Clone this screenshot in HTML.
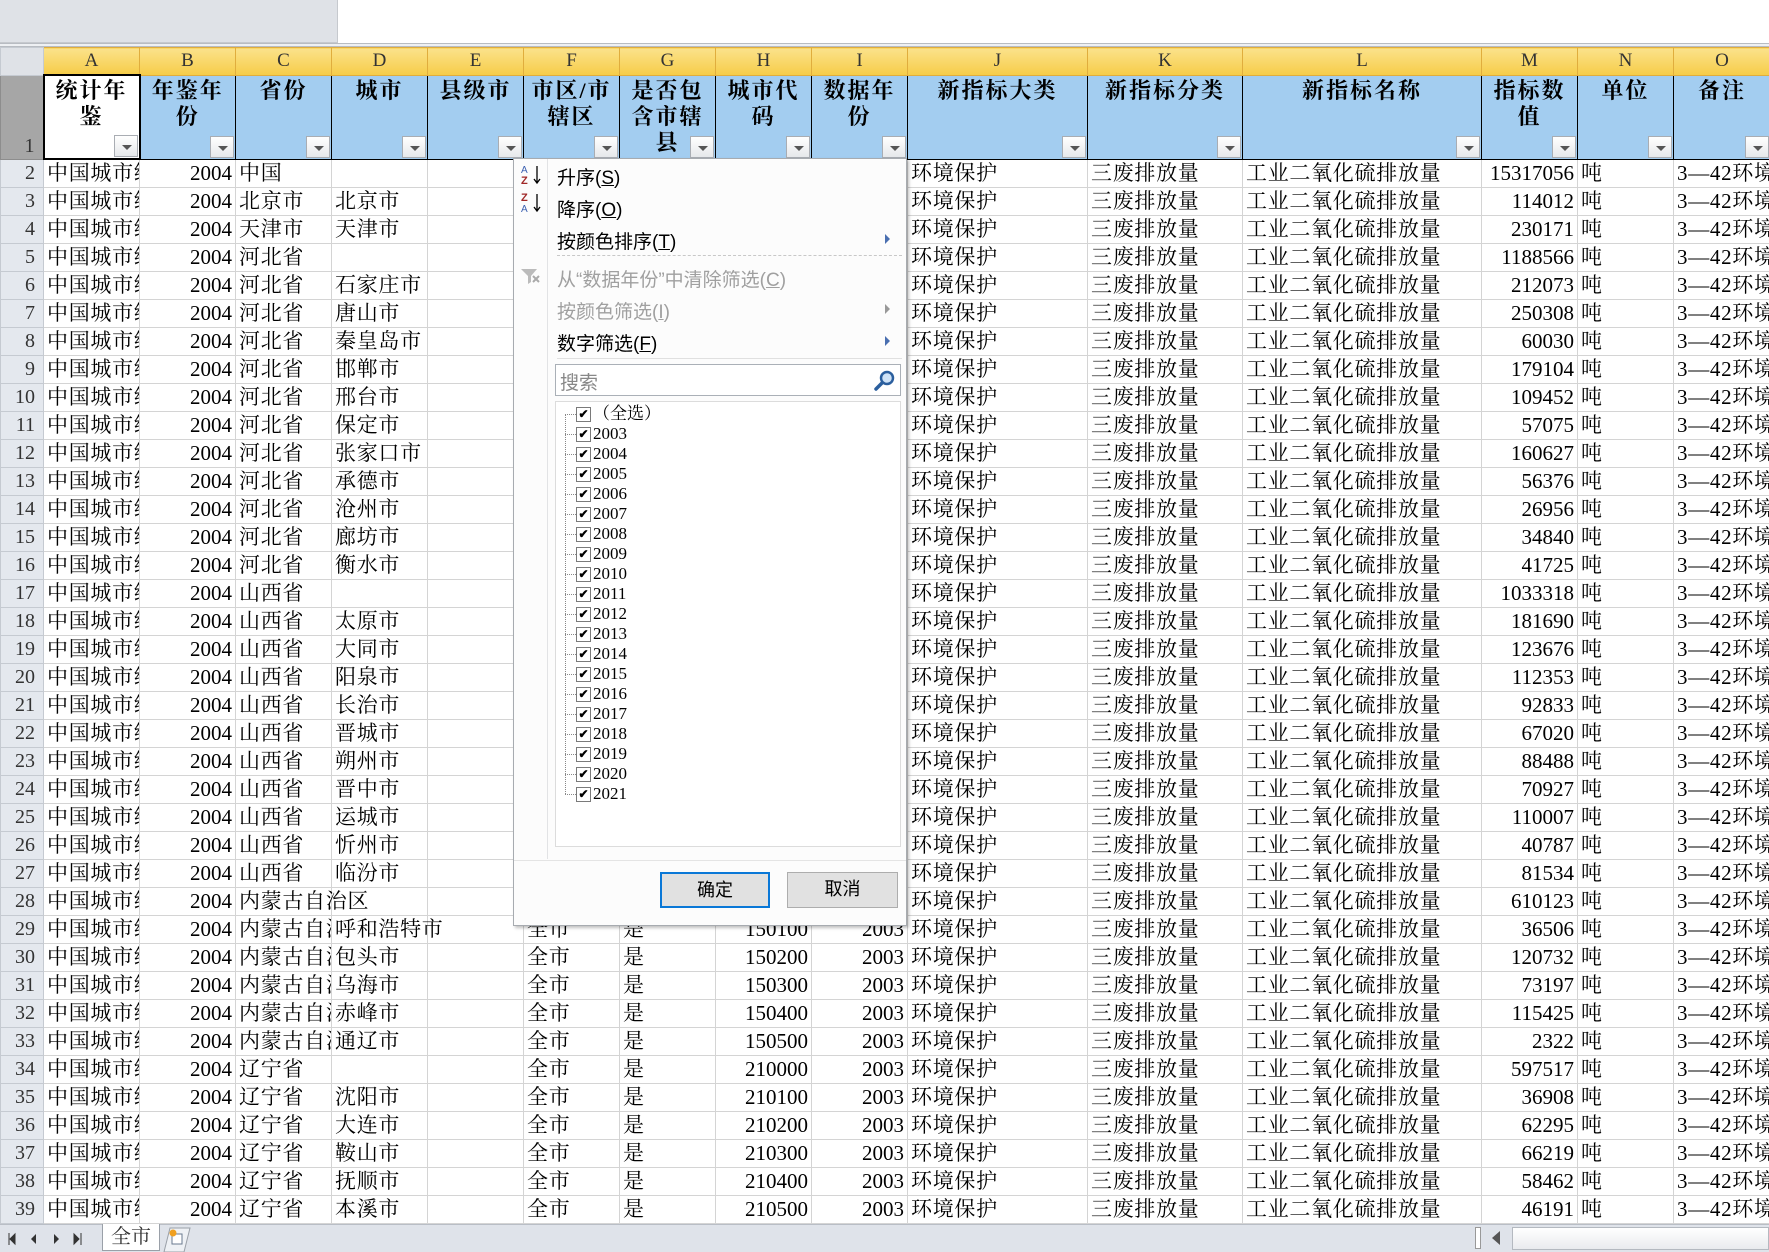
<!DOCTYPE html>
<html><head><meta charset="utf-8">
<style>
*{box-sizing:border-box;margin:0;padding:0}
body{width:1769px;height:1252px;overflow:hidden;background:#fff;font-family:"Liberation Serif","Noto Serif CJK SC","Noto Sans CJK SC",serif;position:relative}
.topgray{position:absolute;left:0;top:0;width:338px;height:43px;background:#dfe2e7;border-right:1px solid #c6c9ce;border-bottom:1px solid #c6c9ce}
.topline{position:absolute;left:0;top:43px;width:1769px;height:4px;border-top:1px solid #b8bcc2;border-bottom:1px solid #b8bcc2;background:#eef0f3}
table{position:absolute;left:0;top:47px;border-collapse:collapse;table-layout:fixed;width:1770px}
td{border:1px solid #d4d4d4;height:28px;font-size:21px;letter-spacing:0.7px;white-space:nowrap;overflow:hidden;padding:0 3px;line-height:26px;color:#000}
td.r{text-align:right;letter-spacing:0}
td.rh{background:#e4e8ee;border-color:#c5cad1;text-align:right;padding-right:8px;color:#333;font-size:20px;letter-spacing:0}
tr.ch td{height:27px;background:linear-gradient(#fbe28b,#f6cc48);border-color:#e0ad3d;text-align:center;font-size:19px;line-height:26px;color:#333;letter-spacing:0}
tr.ch td.corner{background:#dfe2e7;border-color:#c5cad1}
tr.h1 td{height:84px;background:#a3cdf0;border:1px solid #000;border-top-color:#e0ad3d;font-weight:bold;font-size:22px;letter-spacing:2px;text-align:center;vertical-align:top;white-space:nowrap;line-height:26px;padding-top:2px;position:relative}
tr.h1 td.rh{background:#a6a6a6;border-color:#8d8d8d;vertical-align:bottom;font-weight:normal;font-size:20px;letter-spacing:0;text-align:right;padding-bottom:0}
tr.h1 td.a1{background:#fff;border:2px solid #000}
.fb{position:absolute;right:1px;bottom:1px;width:24px;height:22px;background:linear-gradient(#fff,#e6e8eb);border:1px solid #a9adb3}
.fb:after{content:"";position:absolute;left:7px;top:9px;border-left:5px solid transparent;border-right:5px solid transparent;border-top:5px solid #555}
.ov{overflow:visible;position:relative;z-index:1}
.dd{position:absolute;left:513px;top:158px;width:394px;height:768px;background:#fcfcfc;border:1px solid #a7abb0;box-shadow:2px 2px 3px rgba(0,0,0,.25);z-index:5;font-family:"Liberation Sans","Noto Sans CJK SC",sans-serif}
.dd .sep{position:absolute;left:33px;top:0;width:1px;height:700px;background:#e2e3e5}
.mi{position:absolute;left:43px;font-size:19px;color:#000}
.mi.g{color:#a0a0a0}
.arr{position:absolute;left:371px;border-top:5px solid transparent;border-bottom:5px solid transparent;border-left:5px solid #4a6fb0}
.arr.g{border-left-color:#999}
.srch{position:absolute;left:41px;top:205px;width:346px;height:32px;border:1px solid #aab0b7;background:#fff;font-size:19px;color:#888;padding:3px 4px}
.lst{position:absolute;left:41px;top:242px;width:346px;height:446px;border:1px solid #dcdcdc;background:#fff}
.it{position:absolute;left:37px;font-size:17px;font-family:"Liberation Serif","Noto Serif CJK SC",serif;line-height:20px}
.cb{position:absolute;left:-17px;top:3px;width:15px;height:15px;border:1px solid #7a7a7a;background:#fff;font-size:12px;line-height:13px;text-align:center;font-weight:bold}
.dl{position:absolute;left:-28px;top:10px;width:11px;border-top:1px dotted #888}
.btn{position:absolute;top:713px;height:36px;background:#e1e1e1;border:1px solid #adadad;font-size:18px;text-align:center;line-height:32px}
.bot{position:absolute;left:0;top:701px;width:392px;height:1px;background:#e4e4e4}
.tabs{position:absolute;left:0;top:1224px;width:1769px;height:28px;background:#dfe3ea;border-top:1px solid #b9bec6}
.tab{position:absolute;left:102px;top:-1px;width:58px;height:27px;background:#fff;border:1px solid #9aa0a8;border-top:none;font-size:20px;text-align:center;line-height:26px;color:#333}
</style></head><body>
<div class="topgray"></div><div class="topline"></div>
<table id="t">
<colgroup><col style="width:43px"><col style="width:96px"><col style="width:96px"><col style="width:96px"><col style="width:96px"><col style="width:96px"><col style="width:96px"><col style="width:96px"><col style="width:96px"><col style="width:96px"><col style="width:180px"><col style="width:155px"><col style="width:239px"><col style="width:96px"><col style="width:96px"><col style="width:97px"></colgroup>
<tr class="ch"><td class="corner"></td><td>A</td><td>B</td><td>C</td><td>D</td><td>E</td><td>F</td><td>G</td><td>H</td><td>I</td><td>J</td><td>K</td><td>L</td><td>M</td><td>N</td><td>O</td></tr>
<tr class="h1"><td class="rh">1</td><td class="a1">统计年<br>鉴<div class="fb"></div></td><td>年鉴年<br>份<div class="fb"></div></td><td>省份<div class="fb"></div></td><td>城市<div class="fb"></div></td><td>县级市<div class="fb"></div></td><td>市区/市<br>辖区<div class="fb"></div></td><td>是否包<br>含市辖<br>县<div class="fb"></div></td><td>城市代<br>码<div class="fb"></div></td><td>数据年<br>份<div class="fb"></div></td><td>新指标大类<div class="fb"></div></td><td>新指标分类<div class="fb"></div></td><td>新指标名称<div class="fb"></div></td><td>指标数<br>值<div class="fb"></div></td><td>单位<div class="fb"></div></td><td>备注<div class="fb"></div></td></tr>
</table>
<div class="dd">
<div class="sep"></div>
<svg style="position:absolute;left:6px;top:4px" width="24" height="56" viewBox="0 0 24 56"><text x="1" y="10" font-size="10" fill="#3a5fb0" font-family="Liberation Sans">A</text><text x="1" y="21" font-size="11" fill="#a02828" font-weight="bold" font-family="Liberation Sans">Z</text><path d="M17 3V20M14 16l3 4 3-4" stroke="#000" fill="none" stroke-width="1.3"/><text x="1" y="38" font-size="11" fill="#a02828" font-weight="bold" font-family="Liberation Sans">Z</text><text x="1" y="49" font-size="10" fill="#3a5fb0" font-family="Liberation Sans">A</text><path d="M17 31V48M14 44l3 4 3-4" stroke="#000" fill="none" stroke-width="1.3"/></svg>
<svg style="position:absolute;left:6px;top:108px" width="22" height="18"><path d="M1 2h16l-6 7v6l-3 2V9z" fill="#bbb"/><path d="M13 9l6 6M19 9l-6 6" stroke="#aaa" stroke-width="2"/></svg>
<div class="mi" style="top:4px">升序(<u>S</u>)</div>
<div class="mi" style="top:36px">降序(<u>O</u>)</div>
<div class="mi" style="top:68px">按颜色排序(<u>T</u>)</div><div class="arr" style="top:75px"></div>
<div style="position:absolute;left:43px;top:96px;width:345px;border-top:1px dashed #c8c8c8"></div>
<div class="mi g" style="top:106px">从“数据年份”中清除筛选(<u>C</u>)</div>
<div class="mi g" style="top:138px">按颜色筛选(<u>I</u>)</div><div class="arr g" style="top:145px"></div>
<div class="mi" style="top:170px">数字筛选(<u>F</u>)</div><div class="arr" style="top:177px"></div>
<div style="position:absolute;left:43px;top:199px;width:345px;border-top:1px solid #e0e0e0"></div>
<div class="srch">搜索<svg style="position:absolute;right:4px;top:4px" width="22" height="22"><circle cx="13" cy="9" r="6" fill="#cfe3f7" stroke="#2b5f9e" stroke-width="2.5"/><path d="M8 14l-6 6" stroke="#2b5f9e" stroke-width="3.5" stroke-linecap="round"/></svg></div>
<div class="lst" id="lst"></div>
<div class="btn" style="left:146px;width:110px;border:2px solid #0a78d7">确定</div>
<div class="btn" style="left:273px;width:111px">取消</div>
<div class="bot"></div>
</div>
<div class="tabs">
<svg style="position:absolute;left:6px;top:7px" width="80" height="14"><path d="M3 1v12M9 2l-5 5 5 5z" fill="#333" stroke="#333" stroke-width="1"/><path d="M30 2l-5 5 5 5z" fill="#333"/><path d="M48 2l5 5-5 5z" fill="#333"/><path d="M68 2l5 5-5 5zM75 1v12" fill="#333" stroke="#333"/></svg>
<div class="tab">全市</div>
<svg style="position:absolute;left:162px;top:1px" width="30" height="26"><path d="M2 26L8 2h20l-6 24z" fill="#eef1f5" stroke="#9aa0a8"/><rect x="10" y="8" width="10" height="10" fill="#fff" stroke="#6a7a90"/><circle cx="11" cy="7" r="3.5" fill="#f0a020"/></svg>
<div style="position:absolute;left:1475px;top:2px;width:6px;height:22px;background:#fff;border:1px solid #999"></div>
<div style="position:absolute;left:1492px;top:6px;border-top:7px solid transparent;border-bottom:7px solid transparent;border-right:8px solid #555"></div>
<div style="position:absolute;left:1512px;top:2px;width:257px;height:23px;background:linear-gradient(#fff,#e9ebee);border:1px solid #b4b9c0"></div>
</div>
<script>
var rows=[
["2004","中国","",""],["2004","北京市","北京市",""],["2004","天津市","天津市",""],["2004","河北省","",""],["2004","河北省","石家庄市",""],["2004","河北省","唐山市",""],["2004","河北省","秦皇岛市",""],["2004","河北省","邯郸市",""],["2004","河北省","邢台市",""],["2004","河北省","保定市",""],["2004","河北省","张家口市",""],["2004","河北省","承德市",""],["2004","河北省","沧州市",""],["2004","河北省","廊坊市",""],["2004","河北省","衡水市",""],["2004","山西省","",""],["2004","山西省","太原市",""],["2004","山西省","大同市",""],["2004","山西省","阳泉市",""],["2004","山西省","长治市",""],["2004","山西省","晋城市",""],["2004","山西省","朔州市",""],["2004","山西省","晋中市",""],["2004","山西省","运城市",""],["2004","山西省","忻州市",""],["2004","山西省","临汾市",""],["2004","内蒙古自治区","",""],
["2004","内蒙古自治区","呼和浩特市","150100"],["2004","内蒙古自治区","包头市","150200"],["2004","内蒙古自治区","乌海市","150300"],["2004","内蒙古自治区","赤峰市","150400"],["2004","内蒙古自治区","通辽市","150500"],["2004","辽宁省","","210000"],["2004","辽宁省","沈阳市","210100"],["2004","辽宁省","大连市","210200"],["2004","辽宁省","鞍山市","210300"],["2004","辽宁省","抚顺市","210400"],["2004","辽宁省","本溪市","210500"]];
var vals=[15317056,114012,230171,1188566,212073,250308,60030,179104,109452,57075,160627,56376,26956,34840,41725,1033318,181690,123676,112353,92833,67020,88488,70927,110007,40787,81534,610123,36506,120732,73197,115425,2322,597517,36908,62295,66219,58462,46191];
var h="";
for(var i=0;i<rows.length;i++){var r=rows[i];var n=i+2;var cov=n<=28;
var cC=(r[1]=="内蒙古自治区"&&r[2]=="")?'<td class="ov">'+r[1]+'</td>':'<td>'+r[1]+'</td>';
var dC=(r[2]=="呼和浩特市")?'<td class="ov">'+r[2]+'</td>':'<td>'+r[2]+'</td>';
h+='<tr><td class="rh">'+n+'</td><td>中国城市统计年鉴</td><td class="r">'+r[0]+'</td>'+cC+dC+'<td></td>';
if(cov)h+='<td></td><td></td><td></td><td></td>';else h+='<td>全市</td><td>是</td><td class="r">'+r[3]+'</td><td class="r">2003</td>';
h+='<td>环境保护</td><td>三废排放量</td><td>工业二氧化硫排放量</td><td class="r">'+vals[i]+'</td><td>吨</td><td>3—42环境保护</td></tr>';}
document.getElementById("t").insertAdjacentHTML("beforeend",h);
var l="",items=["（全选）"];for(var y=2003;y<=2021;y++)items.push(""+y);
for(var k=0;k<items.length;k++){l+='<div class="it" style="top:'+(2+k*20)+'px"><div class="dl"></div><div class="cb">✔</div>'+items[k]+'</div>';}
l+='<div style="position:absolute;left:9px;top:12px;height:'+(19*20)+'px;border-left:1px dotted #888"></div>';
document.getElementById("lst").innerHTML=l;
</script>
</body></html>
